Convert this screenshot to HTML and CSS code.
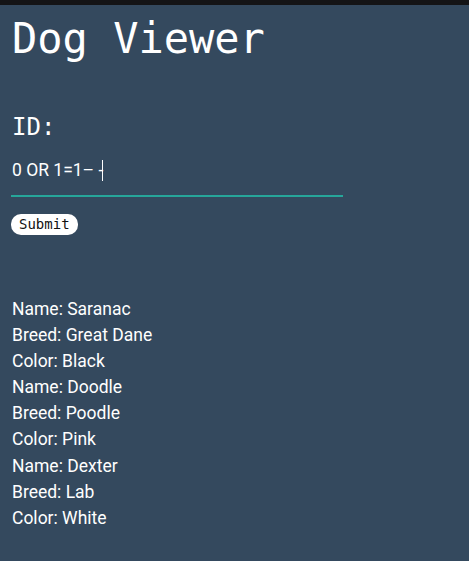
FILE: index.html
```html
<!DOCTYPE html>
<html>
<head>
<meta charset="utf-8">
<link rel="stylesheet" href="styles.css">
</head>
<body>
<div class="topbar"></div>
<main class="page">
  <h1 class="title">Dog Viewer</h1>
  <form class="form">
    <label class="label" for="id">ID:</label>
    <div class="field">
      <span class="value">0 OR 1=1– -</span><span class="caret"></span>
    </div>
    <button class="submit" type="button">Submit</button>
  </form>
  <div class="results">
    <p>Name: Saranac</p>
    <p>Breed: Great Dane</p>
    <p>Color: Black</p>
    <p>Name: Doodle</p>
    <p>Breed: Poodle</p>
    <p>Color: Pink</p>
    <p>Name: Dexter</p>
    <p>Breed: Lab</p>
    <p>Color: White</p>
  </div>
</main>
</body>
</html>
```
FILE: styles.css
```css
html, body {
  margin: 0;
  padding: 0;
  background: #34495e;
}
body {
  font-family: Roboto, "Liberation Sans", sans-serif;
  color: #fff;
  height: 561px;
}
.topbar {
  height: 5px;
  background: #141416;
}
.page {
  padding: 0 12px;
}
.title {
  margin: 0;
  padding-top: 8px;
  font-family: "DejaVu Sans Mono", monospace;
  font-weight: normal;
  font-size: 42px;
  line-height: 52px;
}
.form {
  margin-top: 47px;
  display: flex;
  flex-direction: column;
  align-items: flex-start;
}
.label {
  font-family: "DejaVu Sans Mono", monospace;
  font-size: 24px;
  line-height: 30px;
}
.field {
  width: 332px;
  height: 46px;
  margin-left: -1px;
  margin-top: 9px;
  border-bottom: 2px solid #26a69a;
  display: flex;
  align-items: center;
  font-size: 17.5px;
  box-sizing: border-box;
  padding-left: 1px;
  padding-bottom: 6px;
}
.caret {
  display: inline-block;
  width: 1px;
  height: 21px;
  background: #fff;
  margin-left: -1px;
}
.submit {
  margin-top: 17px;
  margin-left: -1px;
  background: #fff;
  color: #111;
  border: none;
  border-radius: 10px;
  font-family: "DejaVu Sans Mono", monospace;
  font-size: 14px;
  line-height: 21px;
  padding: 0 8px;
  height: 21px;
}
.results {
  margin-top: 61px;
  font-size: 17.5px;
  line-height: 26.1px;
}
.results p {
  margin: 0;
}
```
